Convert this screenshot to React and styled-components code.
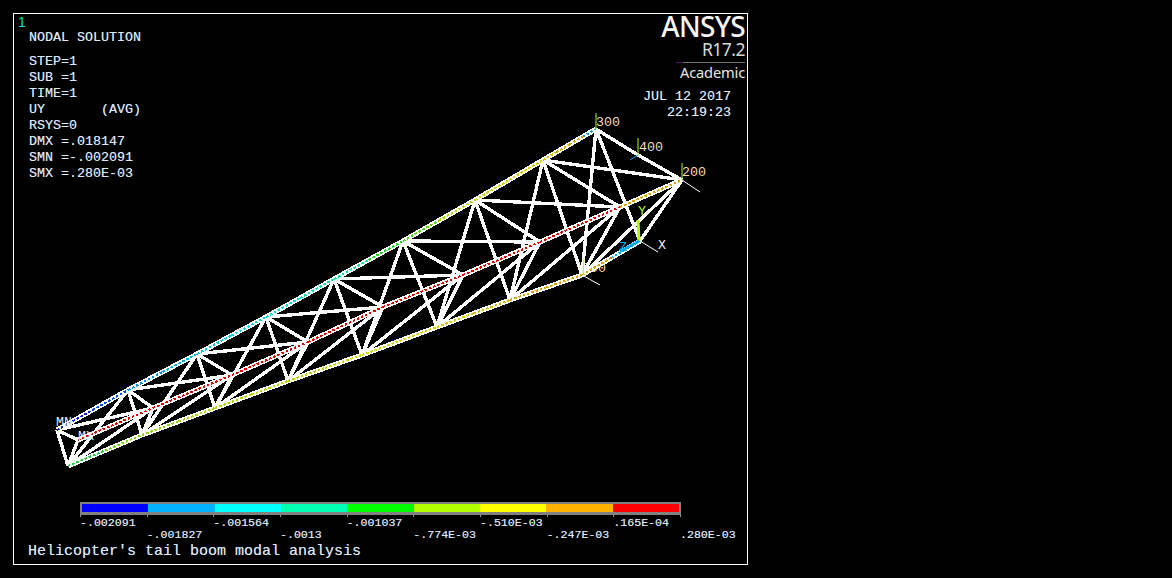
import React from "react";
import styled, { createGlobalStyle } from "styled-components";

const Global = createGlobalStyle`
  html, body { margin: 0; padding: 0; background: #000; }
  #root { width: 1172px; height: 578px; background: #000; overflow: hidden; }
`;

const mono = `"Liberation Mono", "Courier New", monospace`;
const fringe = `text-shadow: 0.3px 0 rgba(70,160,255,.55), -0.3px 0 rgba(255,170,70,.4);`;

const Page = styled.div`
  padding: 13px 0 0 13px;
`;
const Frame = styled.section`
  position: relative;
  box-sizing: border-box;
  width: 735px;
  height: 552px;
  border: 1px solid #fff;
  display: flex;
  flex-direction: column;
  font-family: ${mono};
  color: #dfe8f5;
`;
const TopRow = styled.header`
  display: flex;
  justify-content: space-between;
  align-items: flex-start;
`;
const Info = styled.div`
  display: flex;
  flex-direction: column;
  padding: 2px 0 0 4px;
`;
const WindowNumber = styled.div`
  font: 14px/12px "Liberation Sans", sans-serif;
  color: #00e0d0;
`;
const Title = styled.div`
  font-size: 13.33px;
  line-height: 16px;
  margin: 2px 0 0 11px;
  white-space: pre;
  ${fringe}
`;
const Params = styled.div`
  margin: 8px 0 0 11px;
  display: flex;
  flex-direction: column;
`;
const Param = styled.div`
  font-size: 13.33px;
  line-height: 16px;
  white-space: pre;
  ${fringe}
`;
const Brand = styled.div`
  display: flex;
  flex-direction: column;
  align-items: flex-end;
  padding: 0 2px 0 0;
  color: #f4f4f4;
  font-family: "Noto Sans", sans-serif;
`;
const Logo = styled.div`
  font-size: 28px;
  line-height: 28px;
  font-weight: 500;
  letter-spacing: -0.7px;
  margin-top: -2px;
`;
const Version = styled.div`
  font-size: 17.5px;
  line-height: 18px;
  letter-spacing: -0.5px;
  color: #d8d8d8;
`;
const Rule = styled.div`
  width: 69px;
  height: 1px;
  margin-top: 4px;
  background: linear-gradient(90deg, #4a1470 0 7px, #777 7px);
`;
const Edition = styled.div`
  font-size: 14.6px;
  line-height: 18px;
  letter-spacing: -0.15px;
  color: #e8e8e8;
`;
const Stamp = styled.div`
  font-family: ${mono};
  font-size: 13.33px;
  line-height: 16px;
  text-align: right;
  align-self: flex-end;
  margin: 8px 14px 0 0;
  white-space: pre;
  color: #dfe8f5;
  ${fringe}
`;
const Truss = styled.svg`
  position: absolute;
  left: -14px;
  top: -14px;
  width: 1172px;
  height: 578px;
  pointer-events: none;
`;
const Web = styled.line`
  stroke: #fff;
  stroke-width: 3.4;
  shape-rendering: crispEdges;
`;
const ChordBody = styled.line`
  stroke: #fff;
  stroke-width: 5;
  shape-rendering: crispEdges;
`;
const ChordDots = styled.line`
  stroke-width: 2;
  stroke-dasharray: 2.5 2;
  shape-rendering: crispEdges;
`;
const Tick = styled.line`
  stroke-width: ${(p) => p.$w || 1};
`;
const NodeLabel = styled.text`
  font-family: ${mono};
  font-size: 13.33px;
  fill: ${(p) => p.$c || "#f3d9b8"};
`;
const Legend = styled.footer`
  margin-top: auto;
  padding: 0 0 4px 66px;
  display: flex;
  flex-direction: column;
`;
const Bar = styled.div`
  box-sizing: border-box;
  width: 601px;
  height: 13px;
  border: 2px solid #808080;
  border-bottom-width: 3px;
  display: flex;
`;
const Swatch = styled.div`
  flex: 1;
  background: ${(p) => p.$c};
`;
const Ticks = styled.div`
  width: 601px;
  height: 2px;
  display: grid;
  grid-template-columns: repeat(9, 1fr) 1px;
`;
const TickMark = styled.div`
  border-left: 1px solid #909090;
`;
const Scale = styled.div`
  width: 601px;
  display: grid;
  grid-template-columns: repeat(9, 1fr) 1px;
  grid-auto-rows: 12px;
`;
const ScaleLabel = styled.div`
  grid-row: ${(p) => p.$row};
  grid-column: ${(p) => p.$col};
  font-size: 11.6px;
  line-height: 12px;
  white-space: nowrap;
  ${fringe}
`;
const Caption = styled.div`
  margin: 3px 0 0 -52px;
  font-size: 15px;
  line-height: 16px;
  white-space: pre;
  ${fringe}
`;

const T = [[57,430],[128,390],[197,354],[266,317],[334,279],[403,241],[475,200],[543,160],[596,129]];
const M = [[78,440],[153,408],[232,375],[308,342],[383,307],[463,275],[540,242],[620,207],[682,180]];
const B = [[68,466],[142,435],[215,408],[288,381],[362,355],[437,327],[510,300],[582,275]];
const O = [640,241];
const N400 = [638,155];

const webs = [[T[0],B[0]],[T[0],M[0]],[T[0],M[1]],[B[0],M[0]],[B[0],M[1]],[T[8],N400],[N400,M[8]],[T[8],O],[O,M[8]],[T[8],B[7]]];
for (let i = 1; i < 8; i++) {
  webs.push([T[i],M[i]],[T[i],M[i+1]],[T[i],B[i-1]],[T[i],B[i]]);
}
for (let i = 1; i < 8; i++) webs.push([B[i],M[i]],[B[i],M[i+1]]);

const chords = [];
const addPath = (pts, cols) => {
  pts.slice(0,-1).forEach((p, i) => {
    const q = pts[i+1];
    const n = cols[i].length;
    cols[i].forEach((c, k) => {
      chords.push({
        a: [p[0] + ((q[0]-p[0])*k)/n, p[1] + ((q[1]-p[1])*k)/n],
        b: [p[0] + ((q[0]-p[0])*(k+1))/n, p[1] + ((q[1]-p[1])*(k+1))/n],
        c,
      });
    });
  });
};
addPath(T, [["#1020f0","#0050f0"],["#0090e8","#00b0e0"],["#00c8d8","#00d8d8"],["#00e0d0","#00e0b0"],["#00e090","#20d820"],["#50d800","#a8d800"],["#c8d800","#d8d000"],["#d8c000","#d8a800","#d8a000","#00a8e8"]]);
addPath(M, [["#e00000"],["#e00000"],["#e00000"],["#e00000"],["#e00000"],["#e00000"],["#e00000"],["#d8a000"]]);
addPath(B, [["#20d040","#70d800"],["#90d800","#a8d800"],["#a8d800","#b8d800"],["#b8d800","#c8d800"],["#d0d800","#d8d000"],["#d8c800","#d8b800"],["#d8a800","#d8a000"]]);
addPath([B[7],O], [["#d8a000","#00a8e8"]]);

const colors = ["#0000ff","#00b2ff","#00ffff","#00ffb2","#00ff00","#b2ff00","#ffff00","#ffb200","#ff0000"];
const scale = ["-.002091","-.001827","-.001564","-.0013","-.001037","-.774E-03","-.510E-03","-.247E-03",".165E-04",".280E-03"];
const params = ["STEP=1","SUB =1","TIME=1","UY       (AVG)","RSYS=0","DMX =.018147","SMN =-.002091","SMX =.280E-03"];

export default function App() {
  return (
    <Page>
      <Global />
      <Frame>
        <Truss viewBox="0 0 1172 578">
          <NodeLabel x="582" y="272" $c="#f3d9b8">500</NodeLabel>
          {webs.map(([a,b], i) => <Web key={i} x1={a[0]} y1={a[1]} x2={b[0]} y2={b[1]} />)}
          {chords.map((s, i) => <ChordBody key={i} x1={s.a[0]} y1={s.a[1]} x2={s.b[0]} y2={s.b[1]} />)}
          {chords.map((s, i) => <ChordDots key={i} x1={s.a[0]} y1={s.a[1]} x2={s.b[0]} y2={s.b[1]} stroke={s.c} />)}
          <Tick x1="682" y1="180" x2="700" y2="192" stroke="#fff" />
          <Tick x1="582" y1="275" x2="600" y2="285" stroke="#fff" />
          <Tick x1="640" y1="241" x2="658" y2="252" stroke="#fff" />
          <Tick x1="596" y1="129" x2="596" y2="113" stroke="#b2ff00" />
          <Tick x1="638" y1="155" x2="638" y2="138" stroke="#b2ff00" />
          <Tick x1="682" y1="180" x2="682" y2="163" stroke="#b2ff00" />
          <Tick x1="583" y1="275" x2="584" y2="258" stroke="#b2ff00" />
          <Tick x1="638" y1="155" x2="630" y2="160" stroke="#00a8f0" />
          <Tick x1="639" y1="241" x2="638" y2="220" stroke="#b2ff00" $w="3" />
          <Tick x1="639" y1="241" x2="621" y2="251" stroke="#00a8f0" $w="3" />
          <NodeLabel x="596" y="126">300</NodeLabel>
          <NodeLabel x="639" y="151">400</NodeLabel>
          <NodeLabel x="682" y="176">200</NodeLabel>
          <NodeLabel x="658" y="249" $c="#e8f2ff">X</NodeLabel>
          <NodeLabel x="638" y="215" $c="#b2ff00">Y</NodeLabel>
          <NodeLabel x="619" y="251" $c="#00a8f0">Z</NodeLabel>
          <NodeLabel x="56" y="426" $c="#e0f0ff">MN</NodeLabel>
          <NodeLabel x="78" y="440" $c="#e0f0ff">MX</NodeLabel>
        </Truss>
        <TopRow>
          <Info>
            <WindowNumber>1</WindowNumber>
            <Title>NODAL SOLUTION</Title>
            <Params>
              {params.map((p) => <Param key={p}>{p}</Param>)}
            </Params>
          </Info>
          <Brand>
            <Logo>ANSYS</Logo>
            <Version>R17.2</Version>
            <Rule />
            <Edition>Academic</Edition>
            <Stamp>{"JUL 12 2017\n22:19:23"}</Stamp>
          </Brand>
        </TopRow>
        <Legend>
          <Bar>
            {colors.map((c) => <Swatch key={c} $c={c} />)}
          </Bar>
          <Ticks>
            {scale.map((s) => <TickMark key={s} />)}
          </Ticks>
          <Scale>
            {scale.map((s, i) => <ScaleLabel key={s} $row={i % 2 + 1} $col={i + 1}>{s}</ScaleLabel>)}
          </Scale>
          <Caption>Helicopter's tail boom modal analysis</Caption>
        </Legend>
      </Frame>
    </Page>
  );
}
